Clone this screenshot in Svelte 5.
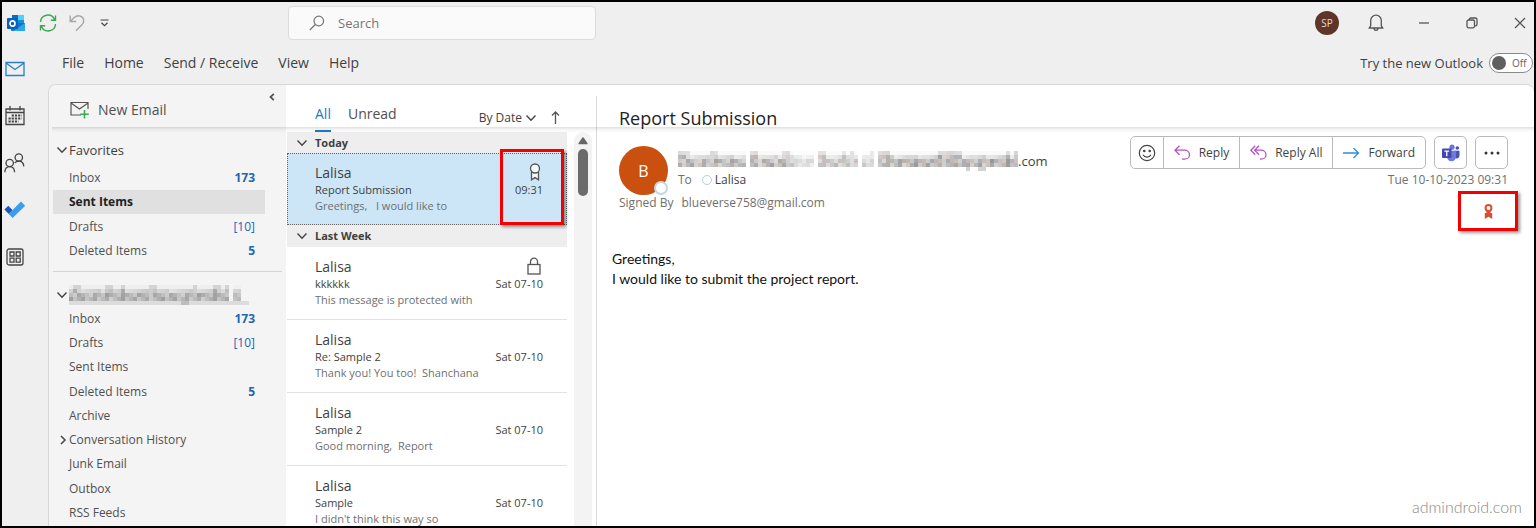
<script>
  const menu = ['File', 'Home', 'Send / Receive', 'View', 'Help'];

  const favorites = [
    { name: 'Inbox', count: '173' },
    { name: 'Sent Items', selected: true },
    { name: 'Drafts', count: '[10]', light: true },
    { name: 'Deleted Items', count: '5' }
  ];

  const folders = [
    { name: 'Inbox', count: '173' },
    { name: 'Drafts', count: '[10]', light: true },
    { name: 'Sent Items' },
    { name: 'Deleted Items', count: '5' },
    { name: 'Archive' },
    { name: 'Conversation History', nested: true },
    { name: 'Junk Email' },
    { name: 'Outbox' },
    { name: 'RSS Feeds' }
  ];

  const groups = [
    {
      title: 'Today',
      items: [
        { from: 'Lalisa', subject: 'Report Submission', preview: 'Greetings,\u00a0\u00a0 I would like to', date: '09:31', icon: 'ribbon', selected: true }
      ]
    },
    {
      title: 'Last Week',
      items: [
        { from: 'Lalisa', subject: 'kkkkkk', preview: 'This message is protected with', date: 'Sat 07-10', icon: 'lock' },
        { from: 'Lalisa', subject: 'Re: Sample 2', preview: 'Thank you! You too!\u00a0 Shanchana', date: 'Sat 07-10' },
        { from: 'Lalisa', subject: 'Sample 2', preview: 'Good morning,\u00a0 Report', date: 'Sat 07-10' },
        { from: 'Lalisa', subject: 'Sample', preview: "I didn't think this way so", date: 'Sat 07-10' }
      ]
    }
  ];

  // Redacted names, drawn as 4px cells. Each word is [first cell, last cell, strength];
  // tall and low list the columns that rise above or drop below the middle rows.
  const account = {
    cols: 45,
    words: [[0, 39, 1], [41, 42, 0.8]],
    tall: [1, 2, 9, 10, 13, 20, 21, 31, 36, 37, 39],
    low: [28, 29],
    base: true,
    tint: false
  };
  const sender = {
    cols: 85,
    words: [[0, 16, 1], [18, 28, 1], [29, 33, 0.5], [35, 44, 0.8], [46, 48, 0.6], [50, 84, 1.1]],
    tall: [0, 1, 2, 8, 9, 18, 19, 26, 27, 35, 36, 41, 43, 48, 50, 51, 52, 65, 66, 67, 68, 69, 70, 82, 84],
    low: [72, 75, 76],
    base: false,
    tint: true
  };

  const tones = ['110, 108, 106', '120, 128, 142', '150, 125, 108', '112, 112, 112'];

  function cells(m) {
    const out = [];
    for (const [a, b, strength] of m.words) {
      for (let x = a; x <= b; x++) {
        for (let y = 0; y < 5; y++) {
          const noise = ((x * 37 + y * 61 + x * y * 13) % 23) / 23;
          let alpha = 0.28 + noise * 0.38;
          if (y === 0) alpha = m.tall.includes(x) ? 0.25 : 0.04;
          if (y === 1) alpha *= m.tall.includes(x) ? 0.9 : 0.5;
          if (y === 4) alpha = m.low.includes(x) ? 0.28 : 0;
          out.push({ x, y, fill: `rgba(${m.tint ? tones[(x * 5 + y * 3) % 4] : tones[3]}, ${(alpha * strength).toFixed(2)})` });
        }
      }
    }
    if (m.base) for (let x = 0; x < m.cols; x++) out.push({ x, y: 4, fill: 'rgba(112, 112, 112, 0.18)' });
    return out;
  }
</script>

{#snippet chevron()}
  <svg class="chev" viewBox="0 0 12 12" aria-hidden="true"><path d="M1.5 3.5 6 8.2l4.5-4.7" /></svg>
{/snippet}

{#snippet mosaic(m, label)}
  <svg class="mosaic" role="img" aria-label={label} width={m.cols * 4} height="20" shape-rendering="crispEdges">
    {#each cells(m) as c}<rect x={c.x * 4} y={c.y * 4} width="4" height="4" fill={c.fill} />{/each}
  </svg>
{/snippet}

{#snippet folderRow(f)}
  <li>
    <button class="folder" class:selected={f.selected}>
      {#if f.nested}
        <svg class="nest" viewBox="0 0 8 10" aria-hidden="true"><path d="M2 1l4 4-4 4" /></svg>
      {/if}
      <span>{f.name}</span>
      {#if f.count}<span class="count" class:light={f.light}>{f.count}</span>{/if}
    </button>
  </li>
{/snippet}

<div class="window">
  <header class="titlebar">
    <svg class="logo" viewBox="0 0 18 18" aria-hidden="true">
      <path d="M5 1h12v9H5z" fill="#1490df" />
      <path d="M11 1h6v5h-6z" fill="#50d0f8" />
      <path d="M5 1h6v5H5z" fill="#0a6cc4" />
      <path d="M4 9h14v7a1 1 0 0 1-1 1H5a1 1 0 0 1-1-1z" fill="#1472cc" />
      <path d="M18 9v7a1 1 0 0 1-1 1H6z" fill="#28a8ea" />
      <rect x="0" y="4" width="11" height="11" rx="1" fill="#0a62b8" />
      <ellipse cx="5.500" cy="9.500" rx="2.500" ry="2.700" fill="none" stroke="#fff" stroke-width="1.700" />
    </svg>
    <button class="tool" aria-label="Sync">
      <svg width="18" height="18" viewBox="0 0 18 18" fill="none" stroke="#3da854" stroke-width="1.400">
        <path d="M1.500 8A7.300 7.300 0 0 1 15.500 5.500M16.500 1.500v4.700h-4.700M16.500 10A7.300 7.300 0 0 1 2.500 12.500M1.500 16.500v-4.700h4.700" />
      </svg>
    </button>
    <button class="tool undo" aria-label="Undo">
      <svg width="16" height="18" viewBox="0 0 16 18" fill="none" stroke="#a6a6a6" stroke-width="1.400">
        <path d="M1.200 1.500v6h6M1.500 7.200 5.200 3.600C9 .2 14.500 2 14.700 6.500c.1 1.900-.7 3.200-2 4.500L7 16.700" />
      </svg>
    </button>
    <button class="tool custom" aria-label="Customize toolbar">
      <svg width="9" height="8" viewBox="0 0 9 8" fill="none" stroke="#444" stroke-width="1.200">
        <path d="M.5 1h8M1.500 3.800 4.500 6.600l3-2.800" />
      </svg>
    </button>
    <label class="search">
      <svg width="16" height="16" viewBox="0 0 16 16" fill="none" stroke="#777" stroke-width="1.200">
        <circle cx="9.800" cy="6" r="4.800" /><path d="M6.300 9.500.8 15" />
      </svg>
      <input type="search" placeholder="Search" aria-label="Search" />
    </label>
    <div class="controls">
      <button class="account" aria-label="Account">SP</button>
      <button aria-label="Notifications">
        <svg width="16" height="18" viewBox="0 0 16 18" fill="none" stroke="#555" stroke-width="1.300">
          <path d="M1.300 14h13.400l-1.400-2.300V6.500a5.300 5.300 0 0 0-10.600 0v5.200zM6 14.300a2 2 0 0 0 4 0" />
        </svg>
      </button>
      <button aria-label="Minimize">
        <svg width="12" height="12" viewBox="0 0 12 12" stroke="#555" stroke-width="1.300"><path d="M1 6h10" /></svg>
      </button>
      <button aria-label="Restore">
        <svg width="12" height="12" viewBox="0 0 12 12" fill="none" stroke="#555" stroke-width="1.300">
          <rect x="1" y="3" width="7.500" height="7.800" rx="1.500" /><path d="M3.300 3V2.600c0-.9.600-1.600 1.500-1.600h4.400C10.300 1 11 1.700 11 2.800v4.400c0 1-.6 1.600-1.500 1.600H8.500" />
        </svg>
      </button>
      <button aria-label="Close">
        <svg width="12" height="12" viewBox="0 0 12 12" stroke="#555" stroke-width="1.300"><path d="M1 1l10 10M11 1 1 11" /></svg>
      </button>
    </div>
  </header>

  <nav class="menu" aria-label="Menu">
    {#each menu as m}<button>{m}</button>{/each}
    <label class="try">
      Try the new Outlook
      <input type="checkbox" />
      <span class="switch"><i></i>Off</span>
    </label>
  </nav>

  <nav class="rail" aria-label="Apps">
    <button aria-label="Mail">
      <svg width="20" height="16" viewBox="0 0 20 16" fill="none" stroke="#2a7fcb" stroke-width="1.300"><path d="M1 1.500h18v13H1zM1 2l9 6.500L19 2" /></svg>
    </button>
    <button aria-label="Calendar">
      <svg width="20" height="20" viewBox="0 0 20 20" fill="none" stroke="#444" stroke-width="1.300">
        <path d="M1 3h18v15.500H1zM1 6.500h18M5 0v4.500M15 0v4.500" />
        <path d="M6.700 9.500h10M3.500 12.500h13.200M3.500 15.500h10" stroke-width="2.200" stroke-dasharray="2.200 1" />
      </svg>
    </button>
    <button aria-label="People">
      <svg width="22" height="20" viewBox="0 0 22 20" fill="none" stroke="#444" stroke-width="1.300">
        <circle cx="5.700" cy="10" r="3.700" /><circle cx="14.800" cy="4.500" r="3.700" />
        <path d="M.8 19.200c.2-3.300 2-5.500 4.900-5.500s4.700 2.200 4.900 5.500M10.700 10c.9-1.300 2.300-1.900 4.100-1.900 2.900 0 4.800 2 5 5.300" />
      </svg>
    </button>
    <button aria-label="To Do">
      <svg width="22" height="18" viewBox="0 0 22 18">
        <path d="M.4 8.600 4.300 4.700l4.400 4.500-3.900 3.900z" fill="#1d57b8" /><path d="M4.600 12.900 17 .6 21.200 4.700 8.600 17z" fill="#3b9df0" />
      </svg>
    </button>
    <button aria-label="More apps">
      <svg width="18" height="18" viewBox="0 0 18 18" fill="none" stroke="#444" stroke-width="1.300">
        <rect x="1" y="1" width="16" height="16" rx="2" />
        <path d="M4 4h4v4H4zM10.200 4h4v4h-4zM4 10.200h4v4H4zM10.200 10.200h4v4h-4z" />
      </svg>
    </button>
  </nav>

  <main class="panel">
    <aside class="folders">
      <div class="new">
        <button class="newmail">
          <svg width="20" height="18" viewBox="0 0 20 18" fill="none" stroke="#555" stroke-width="1.200">
            <path d="M18 8V1.500H1v12.500h10M1 2l8.500 6L18 2" /><path d="M14.500 9v8.500M10.200 13.200h8.600" stroke="#3da854" stroke-width="1.600" />
          </svg>
          New Email
        </button>
        <button class="collapse" aria-label="Collapse folder pane">
          <svg width="6" height="8" viewBox="0 0 6 8" fill="none" stroke="#555" stroke-width="1.800"><path d="M4.800.8 1.500 4l3.300 3.200" /></svg>
        </button>
      </div>
      <section class="favorites">
        <h2>{@render chevron()}Favorites</h2>
        <ul>{#each favorites as f}{@render folderRow(f)}{/each}</ul>
      </section>
      <section class="mailbox">
        <h2>{@render chevron()}{@render mosaic(account, 'Hidden account')}</h2>
        <ul>{#each folders as f}{@render folderRow(f)}{/each}</ul>
      </section>
    </aside>

    <section class="list">
      <div class="tabs">
        <button class="tab active">All</button>
        <button class="tab">Unread</button>
        <button class="sort">By Date {@render chevron()}</button>
        <button class="order" aria-label="Sort ascending">
          <svg width="9" height="13" viewBox="0 0 9 13" fill="none" stroke="#555" stroke-width="1.300"><path d="M4.500 13V1M1 4.500 4.500 1 8 4.500" /></svg>
        </button>
      </div>
      <div class="scroll">
        <div class="mails">
          {#each groups as g}
            <h3>{@render chevron()}{g.title}</h3>
            {#each g.items as m}
              <article class="mail" class:selected={m.selected}>
                <div class="text">
                  <p class="from">{m.from}</p>
                  <p>{m.subject}</p>
                  <p class="preview">{m.preview}</p>
                </div>
                <div class="meta">
                  <span class="flag">
                    {#if m.icon === 'ribbon'}
                      <svg width="12" height="18" viewBox="0 0 12 18" fill="none" stroke="#555" stroke-width="1.300">
                        <path d="M2.500 9v7.800L6 14.600l3.500 2.200V9" fill="#f5f9fc" /><circle cx="6" cy="5.500" r="4.500" fill="#f5f9fc" />
                      </svg>
                    {:else if m.icon === 'lock'}
                      <svg width="14" height="18" viewBox="0 0 14 18" fill="none" stroke="#555" stroke-width="1.300">
                        <rect x="1" y="7.500" width="12" height="9.500" /><path d="M3.500 7.500V4.700a3.500 3.500 0 0 1 7 0v2.800" />
                      </svg>
                    {/if}
                  </span>
                  <time>{m.date}</time>
                </div>
                {#if m.selected}<span class="mark"></span>{/if}
              </article>
            {/each}
          {/each}
        </div>
        <div class="bar">
          <svg width="10" height="8" viewBox="0 0 10 8" aria-hidden="true"><path d="M4.200.8a1 1 0 0 1 1.600 0l3.700 5.400c.3.600 0 1.100-.7 1.100H1.200C.5 7.300.2 6.800.5 6.200z" fill="#666" /></svg>
          <i></i>
        </div>
      </div>
    </section>

    <section class="reading">
      <h1>Report Submission</h1>
      <div class="head">
        <div class="who">
          <div class="avatar">B<i></i></div>
          <div>
            <p class="sender">{@render mosaic(sender, 'Hidden sender')}.com</p>
            <p class="to"><span>To</span><i></i>Lalisa</p>
          </div>
        </div>
        <p class="signed"><span>Signed By</span>blueverse758@gmail.com</p>
      </div>
      <div class="side">
        <div class="actions">
          <div class="group">
            <button aria-label="React">
              <svg width="18" height="18" viewBox="0 0 18 18" fill="none" stroke="#444" stroke-width="1.200">
                <circle cx="9" cy="9" r="7.700" /><path d="M5 10.800c1.800 3 6.200 3 8 0" /><circle cx="6.300" cy="7" r=".7" fill="#444" /><circle cx="11.700" cy="7" r=".7" fill="#444" />
              </svg>
            </button>
            <button>
              <svg width="17" height="15" viewBox="0 0 17 15" fill="none" stroke="#b553c4" stroke-width="1.300"><path d="M5.500.8 1 5.200l4.500 4.500M1 5.200h9.500a5 4.500 0 0 1 0 9H8" /></svg>
              Reply
            </button>
            <button>
              <svg width="17" height="15" viewBox="0 0 17 15" fill="none" stroke="#b553c4" stroke-width="1.300"><path d="M5.200.8.9 5.200l4.300 4.500M9 .8 4.700 5.200 9 9.700M4.700 5.200H11a5 4.500 0 0 1 0 9h-1" /></svg>
              Reply All
            </button>
            <button>
              <svg width="17" height="12" viewBox="0 0 17 12" fill="none" stroke="#2a8fd8" stroke-width="1.300"><path d="M0 6h15.500M10.500 1l5 5-5 5" /></svg>
              Forward
            </button>
          </div>
          <button class="single" aria-label="Share to Teams">
            <svg width="18" height="18" viewBox="0 0 18 18">
              <circle cx="10" cy="3.200" r="2.600" fill="#6b74dc" /><circle cx="15.300" cy="4" r="1.800" fill="#4a52b8" />
              <path d="M12 6.700h5.500v5a3 3 0 0 1-5.500 1.500z" fill="#4a52b8" /><path d="M5 6.700h9v6a4.500 4.500 0 0 1-9 0z" fill="#7079e2" />
              <rect x="0" y="4.500" width="9.500" height="9.500" rx="1" fill="#4149b0" /><path d="M2.400 7.200h4.700M4.750 7.200v5" stroke="#fff" stroke-width="1.300" />
            </svg>
          </button>
          <button class="single" aria-label="More actions">
            <svg width="16" height="4" viewBox="0 0 16 4" fill="#333"><circle cx="2" cy="2" r="1.500" /><circle cx="8" cy="2" r="1.500" /><circle cx="14" cy="2" r="1.500" /></svg>
          </button>
        </div>
        <time>Tue 10-10-2023 09:31</time>
        <button class="signature" aria-label="Verify signature">
          <svg width="9" height="15" viewBox="0 0 9 15" fill="none">
            <circle cx="4.500" cy="4" r="2.900" stroke="#d8502f" stroke-width="2" /><path d="M2.500 6h4v3.500h-4z" fill="#d8502f" /><path d="M.8 9h7.400v6L4.500 12.800.8 15z" fill="#d8502f" />
          </svg>
        </button>
      </div>
      <div class="body">
        <p>Greetings,</p>
        <p>I would like to submit the project report.</p>
      </div>
      <footer>admindroid.com</footer>
    </section>
  </main>
</div>

<style>
  :global(body) { margin: 0; }
  .window, .window * { box-sizing: border-box; }
  .window {
    height: 100vh;
    display: grid;
    grid-template: 42px 40px minmax(0, 1fr) / 46px minmax(0, 1fr);
    border: 2px solid #000;
    background: #efefef;
    color: #3f3f3f;
    font: 12px/16px "Open Sans", "Noto Sans", sans-serif;
    overflow: hidden;
  }
  h1, h2, h3, p, ul { margin: 0; padding: 0; font-weight: 400; }
  ul { list-style: none; display: grid; grid-auto-rows: 1fr; }
  svg { flex: none; display: block; }
  button { font: inherit; color: inherit; background: none; border: 0; padding: 0; margin: 0; white-space: nowrap; }
  .chev { width: 12px; height: 12px; fill: none; stroke: #444; stroke-width: 1.4px; }

  .titlebar { grid-column: 1 / -1; display: flex; align-items: center; }
  .logo { width: 18px; height: 18px; margin-left: 5px; }
  .tool { margin-left: 14px; }
  .tool.undo { margin-left: 12px; }
  .tool.custom { margin-left: 15px; }
  .search {
    display: flex; align-items: center; gap: 13px;
    flex: 0 1 308px; height: 34px; margin-left: 179px; padding: 0 20px;
    background: #fafafa; border: 1px solid #dcdcdc; border-radius: 4px;
  }
  .search input { border: 0; outline: 0; padding: 0; width: 100%; min-width: 0; background: none; font: 13px/18px "Open Sans", sans-serif; }
  .search input::placeholder { color: #767676; opacity: 1; }
  .controls { margin-left: auto; display: flex; align-items: center; gap: 20px; }
  .controls button { width: 28px; height: 24px; display: grid; place-items: center; }
  .controls button.account { width: 24px; margin-right: 3px; border-radius: 50%; background: #5f3529; color: #e6d8d2; font-size: 10px; }

  .menu { grid-column: 1 / -1; display: flex; align-items: center; gap: 20px; padding: 0 1px 2px 60px; font-size: 14px; line-height: 18px; }
  .try { margin-left: auto; display: flex; align-items: center; gap: 6px; font-size: 13px; }
  .try input { position: absolute; opacity: 0; }
  .switch {
    display: flex; align-items: center; gap: 6px; width: 44px; height: 20px; padding: 0 2px;
    border: 1px solid #8a8a8a; border-radius: 10px; background: #fff; font-size: 10px; color: #666;
  }
  .switch i { width: 14px; height: 14px; border-radius: 50%; background: #5f5f5f; }

  .rail { display: flex; flex-direction: column; gap: 23px; margin-top: -27px; }
  .rail button { width: 26px; height: 24px; display: grid; place-items: center; }

  .panel {
    position: relative; min-height: 0; overflow: hidden;
    display: grid; grid-template-columns: 237px 310px minmax(0, 1fr);
    background: #fff; border: 1px solid #d8d8d8; border-width: 1px 0 0 1px; border-radius: 8px 8px 0 0;
  }
  /* lower edge of the collapsed ribbon, drawn over all three columns */
  .panel::after {
    content: ""; position: absolute; left: 3px; right: 0; top: 42px; height: 6px; pointer-events: none;
    background: linear-gradient(rgba(0, 0, 0, 0.12), rgba(0, 0, 0, 0.03) 50%, transparent);
  }

  .folders { background: #f4f4f4; padding-left: 4px; min-height: 0; }
  .new { display: flex; align-items: flex-start; height: 44px; }
  .newmail { display: flex; align-items: center; gap: 8px; height: 18px; margin: 16px 0 0 17px; font-size: 14px; color: #505050; }
  .collapse { margin: 8px 11px 0 auto; }
  .favorites { padding: 8px 0 8px; margin-right: 4px; border-bottom: 1px solid #d4d4d4; }
  .favorites ul { height: 97px; }
  .mailbox { padding-top: 11px; }
  .mailbox ul { height: 218px; }
  h2 { display: flex; align-items: center; gap: 1px; height: 29px; padding: 0 0 3px 3px; font-size: 13px; line-height: 18px; }
  .mailbox h2 { height: 24px; padding-bottom: 0; }
  .folder { position: relative; display: flex; align-items: center; width: 212px; height: 24px; padding: 0 10px 0 16px; color: #505050; }
  .folder.selected { background: #e0e0e0; color: #222; font-weight: 700; }
  .nest { position: absolute; left: 6px; width: 8px; height: 10px; fill: none; stroke: #444; stroke-width: 1.5px; }
  .count { margin-left: auto; color: #1f66b5; font-weight: 700; }
  .count.light { font-weight: 400; }

  .list { display: flex; flex-direction: column; min-width: 0; min-height: 0; padding-left: 1px; }
  .tabs { display: flex; align-items: flex-end; height: 47px; padding-left: 28px; flex: none; }
  .tab { height: 28px; padding-bottom: 6px; font-size: 14px; line-height: 20px; border-bottom: 2px solid transparent; color: #505050; }
  .tab.active { color: #1b78c8; border-color: #1b78c8; margin-right: 17px; }
  .sort { display: flex; align-items: center; gap: 3px; margin: 0 14px 6px auto; }
  .order { margin: 0 36px 8px 0; }
  .scroll { flex: 1; min-height: 0; display: flex; gap: 7px; padding-right: 4px; overflow: hidden; }
  .mails { flex: 1; min-width: 0; }
  h3 { display: flex; align-items: center; gap: 7px; height: 22px; padding-left: 9px; background: #eee; font-size: 11px; font-weight: 700; }
  h3:first-child { height: 21px; }
  .mail { position: relative; display: flex; justify-content: space-between; height: 73px; padding: 11px 24px 0 28px; border-bottom: 1px solid #e2e2e2; font-size: 11px; }
  .mail.selected { background: #cde6f7; border: 1px dotted #666; height: 72px; padding: 10px 23px 0 27px; }
  .text { white-space: nowrap; }
  .from { font-size: 14px; line-height: 18px; }
  .preview { color: #6f6f6f; }
  .meta { display: flex; flex-direction: column; align-items: flex-end; }
  .flag { height: 18px; margin-right: 2px; }
  .flag svg { margin-top: -1px; }
  .mark { position: absolute; top: -5px; right: 2px; width: 64px; height: 76px; border: 3px solid #f40000; box-shadow: 2px 2px 3px rgba(0, 0, 0, 0.4); }
  .bar { width: 18px; background: #f3f3f3; border-radius: 9px 9px 0 0; display: flex; flex-direction: column; align-items: center; gap: 4px; padding-top: 5px; }
  .bar i { width: 10px; height: 47px; border-radius: 5px; background: #6b6b6b; }

  .reading {
    display: grid; min-width: 0; margin-top: 11px; padding: 9px 0 0 14px; border-left: 1px solid #dadada;
    grid-template: 29px 106px 1fr auto / minmax(0, 1fr) auto;
  }
  h1 { grid-column: 1 / -1; padding-left: 8px; font-size: 18px; line-height: 26px; color: #222; }
  .head { padding: 12px 0 0 8px; min-width: 0; }
  .who { display: flex; gap: 10px; }
  .avatar { position: relative; flex: none; display: grid; place-items: center; width: 49px; height: 49px; border-radius: 50%; background: #c9500f; color: #fff; font-size: 16px; }
  .avatar i { position: absolute; right: 0; bottom: 0; width: 14px; height: 14px; border-radius: 50%; background: #fff; border: 2px solid #c4d8e0; }
  .sender { display: flex; align-items: center; height: 18px; margin-top: 6px; font-size: 13px; white-space: nowrap; }
  .to { display: flex; align-items: center; margin-top: 2px; }
  .to span { color: #6f6f6f; }
  .to i { width: 10px; height: 10px; margin: 0 3px 0 10px; border: 1px solid #b4d0dc; border-radius: 50%; }
  .signed { color: #6f6f6f; }
  .signed span { margin-right: 8px; }
  .side { display: flex; flex-direction: column; align-items: flex-end; padding: 2px 26px 0 0; }
  .actions { display: flex; gap: 8px; }
  .group, .single { height: 33px; border: 1px solid #bababa; border-radius: 5px; }
  .group { display: flex; }
  .group button { display: flex; align-items: center; justify-content: center; gap: 8px; padding: 0 10px; }
  .group button:first-child { padding: 0 7px; }
  .group button + button { border-left: 1px solid #bababa; }
  .single { display: grid; place-items: center; width: 33px; }
  .side time { margin-top: 3px; color: #6f6f6f; }
  .signature { display: grid; place-items: center; width: 60px; height: 40px; margin: 3px -10px 0 0; border: 3px solid #f40000; box-shadow: 2px 2px 3px rgba(0, 0, 0, 0.4); flex: none; }
  .body { grid-column: 1 / -1; padding: 9px 0 0 1px; font: 14px/20px Lato, sans-serif; color: #111; }
  footer { grid-column: 1 / -1; justify-self: end; padding: 0 12px 9px 0; font: 300 16px/20px Lato, sans-serif; color: #888; }
</style>
